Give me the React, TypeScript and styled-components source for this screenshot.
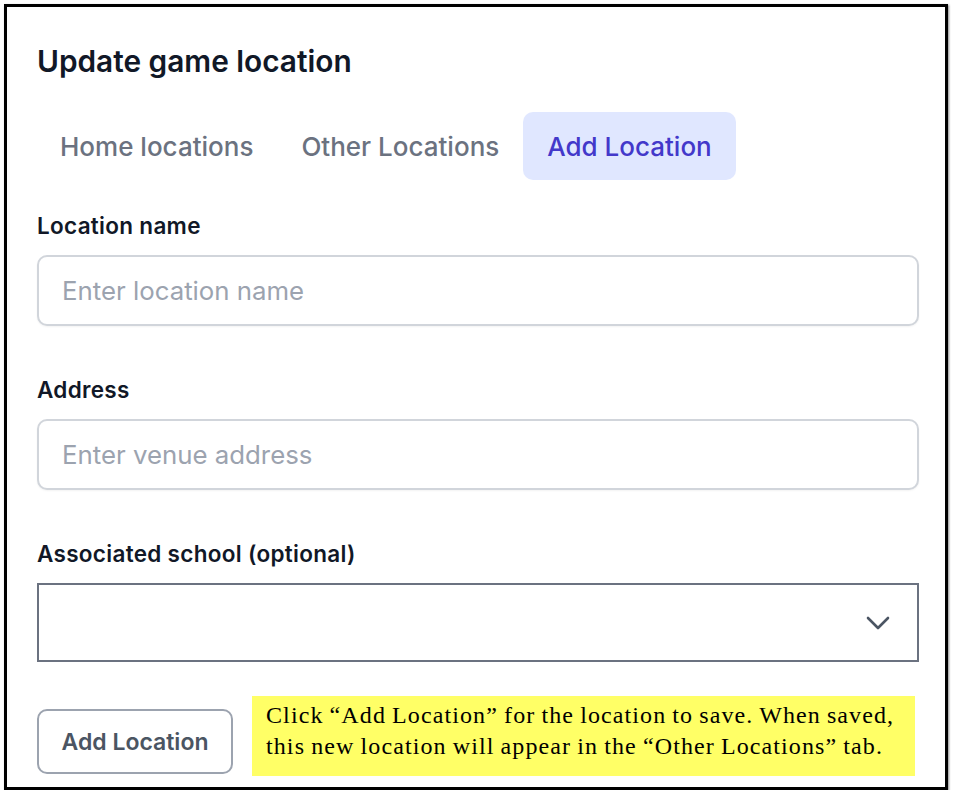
import React, { useState } from "react";
import styled, { createGlobalStyle } from "styled-components";

const GlobalStyle = createGlobalStyle`
  body {
    margin: 0;
    background: #fff;
    font-family: Inter, "Noto Sans", sans-serif;
  }
  * {
    box-sizing: border-box;
  }
`;

const Frame = styled.div`
  margin: 4px 0 0 4px;
  width: 944px;
  height: 786px;
  border: 3px solid #000;
  box-shadow: 1px 1px 2px rgba(0, 0, 0, 0.45);
  padding: 0 26px 0 30px;
  overflow: hidden;
  background: #fff;
`;

const Title = styled.h2`
  margin: 0;
  padding-top: 34px;
  font-size: 29.8px;
  line-height: 40px;
  font-weight: 600;
  color: #111827;
`;

const TabList = styled.div`
  display: flex;
  margin: 31px 0 0 -1px;
`;

const Tab = styled.button<{ $active?: boolean }>`
  border: none;
  margin: 0;
  height: 68px;
  padding: 0 24px;
  border-radius: 10px;
  font-family: inherit;
  font-size: 26px;
  font-weight: 500;
  cursor: pointer;
  color: ${(p) => (p.$active ? "#4338ca" : "#6b7280")};
  background: ${(p) => (p.$active ? "#e0e7ff" : "transparent")};
`;

const Field = styled.div<{ $top: number }>`
  display: flex;
  flex-direction: column;
  margin-top: ${(p) => p.$top}px;
`;

const Label = styled.label`
  font-size: 22.5px;
  line-height: 28px;
  font-weight: 600;
  letter-spacing: 0.3px;
  color: #111827;
  margin-bottom: 15px;
`;

const TextInput = styled.input`
  width: 100%;
  height: 71px;
  border: 2px solid #d1d5db;
  border-radius: 10px;
  box-shadow: 0 1px 2px rgba(0, 0, 0, 0.05);
  padding: 0 23px;
  font-family: inherit;
  font-size: 25.8px;
  color: #111827;
  outline: none;
  &::placeholder {
    color: #9ca3af;
  }
`;

const SelectBox = styled.div`
  height: 79px;
  border: 2px solid #6b7280;
  display: flex;
  align-items: center;
  justify-content: flex-end;
  padding-right: 27px;
`;

const Chevron = styled.svg`
  width: 24px;
  height: 14px;
  color: #4b5563;
`;

const BottomRow = styled.div`
  display: flex;
  align-items: flex-start;
  gap: 19px;
  margin-top: 34px;
`;

const Button = styled.button`
  margin-top: 13px;
  width: 196px;
  height: 65px;
  border: 2px solid #9ca3af;
  border-radius: 10px;
  background: #fff;
  font-family: inherit;
  font-size: 23px;
  font-weight: 600;
  color: #4b5563;
  cursor: pointer;
`;

const Note = styled.div`
  width: 663px;
  height: 80px;
  background: #ffff66;
  padding: 4px 0 0 14px;
  font-family: "Liberation Serif", "Times New Roman", serif;
  font-size: 24px;
  line-height: 31px;
  letter-spacing: 1.1px;
  word-spacing: -1px;
  color: #000;
`;

const tabs = ["Home locations", "Other Locations", "Add Location"];

export default function App() {
  const [active, setActive] = useState("Add Location");
  return (
    <>
      <GlobalStyle />
      <Frame>
        <Title>Update game location</Title>
        <TabList>
          {tabs.map((t) => (
            <Tab key={t} $active={t === active} onClick={() => setActive(t)}>
              {t}
            </Tab>
          ))}
        </TabList>
        <Field $top={32}>
          <Label>Location name</Label>
          <TextInput placeholder="Enter location name" />
        </Field>
        <Field $top={50}>
          <Label>Address</Label>
          <TextInput placeholder="Enter venue address" />
        </Field>
        <Field $top={50}>
          <Label>Associated school (optional)</Label>
          <SelectBox>
            <Chevron viewBox="0 0 24 14" fill="none">
              <path
                d="M2 2l10 10 10-10"
                stroke="currentColor"
                strokeWidth="2.6"
                strokeLinecap="round"
                strokeLinejoin="round"
              />
            </Chevron>
          </SelectBox>
        </Field>
        <BottomRow>
          <Button>Add Location</Button>
          <Note>
            Click “Add Location” for the location to save. When saved,
            <br />
            this new location will appear in the “Other Locations” tab.
          </Note>
        </BottomRow>
      </Frame>
    </>
  );
}
